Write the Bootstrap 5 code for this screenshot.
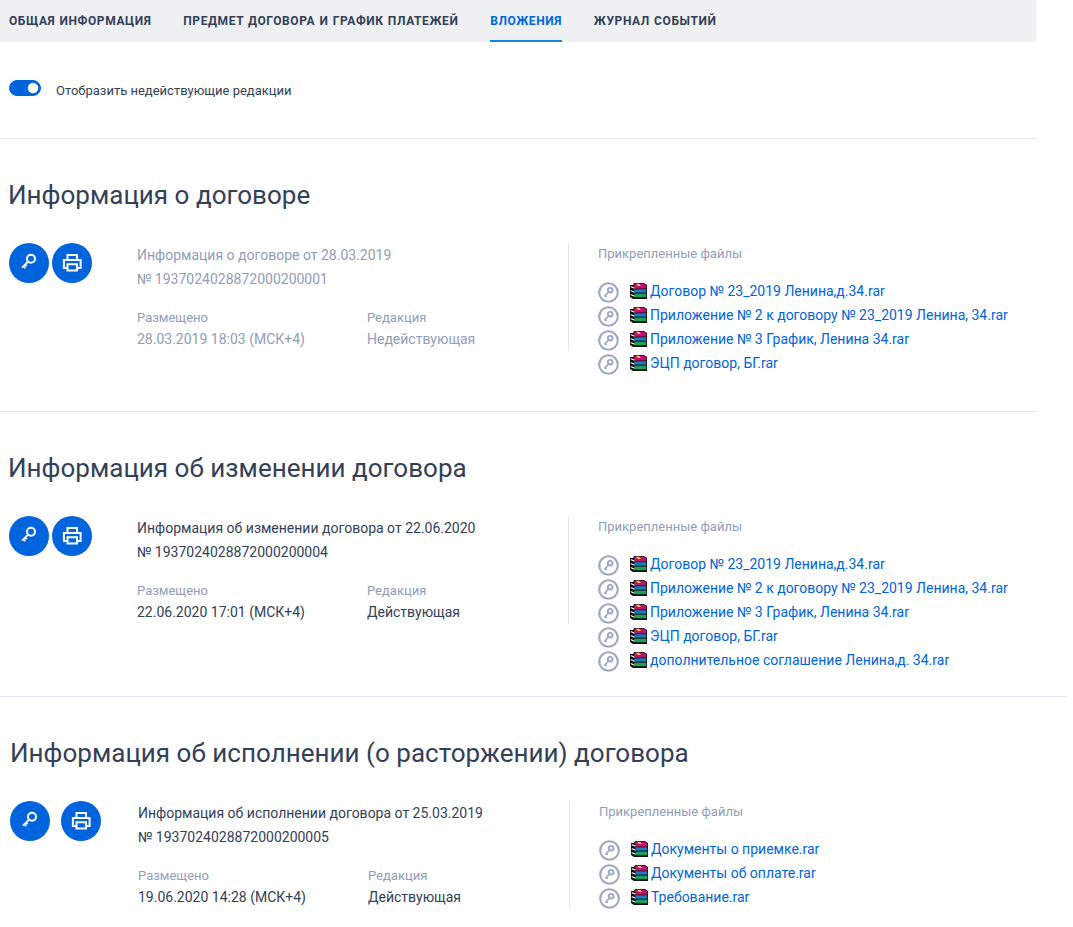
<!DOCTYPE html>
<html lang="ru">
<head>
<meta charset="utf-8">
<title>Вложения</title>
<link href="https://cdn.jsdelivr.net/npm/bootstrap@5.3.0/dist/css/bootstrap.min.css" rel="stylesheet">
<style>
html,body{overflow:hidden;height:927px}
body{font-family:Roboto,"Liberation Sans",sans-serif;font-size:14px;color:#334059;background:#fff}
.tabs{width:1036px;height:42px;background:#eff0f2;padding-left:9px;gap:31.8px}
.tabs .nav-link{padding:0;height:42px;line-height:43px;font-size:12px;font-weight:700;letter-spacing:.6px;word-spacing:.6px;color:#334059;text-transform:uppercase;border-bottom:2px solid transparent}
.tabs .nav-link.active{color:#0065dd;border-bottom-color:#1a83e6}
.toggle-row{height:97px;width:1036px;padding-left:9px;border-bottom:1px solid #e4e7f2;padding-top:38px}
.toggle-row .form-check-input{margin:0;float:none;width:32px;height:16px;background-color:#0065dd;border-color:#0065dd;box-shadow:none}
.toggle-row label{font-size:13px;margin-left:15px;line-height:16px;margin-top:3px}
.sec{padding-left:9px}
.sec-1{height:273px;width:1036px;border-bottom:1px solid #e4e7f2}
.sec-2{height:285px;width:1067px;border-bottom:1px solid #e4e7f2}
.sec-3{padding-left:10px}
h2.title{font-size:26px;font-weight:400;line-height:32px;color:#334059;margin:0 0 0 -1px;padding-top:40px;height:104px;letter-spacing:.02px}
.sec-3 h2.title{margin-left:0}
.acts{width:128px;gap:3px;flex:none}
.sec-3 .acts{gap:11px}
.round{width:40px;height:40px;padding:0;border-radius:50%;background:#0065dd;border:0;color:#fff}
.info{width:431px;flex:none;line-height:24px}
.info.off,.info.off .val{color:#919db9}
.head-line{margin-bottom:16px}
.head-line div{height:24px}
.cols .lab{width:230px;flex:none}
.lab small{display:block;font-size:13px;line-height:22px;color:#919db9}
.val{line-height:22px;margin-top:-1px}
.files{border-left:1px solid #e4e7f2;padding-left:29px;height:108px}
.files-h{font-size:13px;line-height:22px;color:#919db9;margin:0 0 14px}
.file{height:24px;line-height:24px;gap:11px;white-space:nowrap}
.file a{color:#0065dd;text-decoration:none}
.file .ck{margin-top:2px}
.file .rar{margin-right:-8px}
</style>
</head>
<body>
<svg width="0" height="0" class="d-block" aria-hidden="true">
<defs>
<symbol id="key" viewBox="0 0 20 20"><circle cx="12" cy="5.700" r="4" fill="none" stroke="currentColor" stroke-width="2"/><path d="M9.200 8.500 3 14.700M4.300 13.200l2 2M6.100 11.500l1.700 1.700" fill="none" stroke="currentColor" stroke-width="1.800"/></symbol>
<symbol id="print" viewBox="0 0 20 20"><path d="M5.500 7V1.900h9.500V7M5.500 15H1.900V7h16.700v8H15" fill="none" stroke="currentColor" stroke-width="2"/><path d="M5.500 11.300H15v6.300H5.500z" fill="none" stroke="currentColor" stroke-width="2"/></symbol>
<symbol id="ckey" viewBox="0 0 21 21"><circle cx="10.500" cy="10.500" r="9.300" fill="none" stroke="#9ca7c4" stroke-width="2.100"/><circle cx="12.200" cy="8.200" r="2.300" fill="none" stroke="#9ca7c4" stroke-width="1.900"/><path d="M10.500 10 6.300 14.500M7.300 13.500l1.300 1.300" fill="none" stroke="#9ca7c4" stroke-width="1.700"/></symbol>
<symbol id="rar" viewBox="0 0 17 16"><path d="M0 2h3l1-2h10l3 2v14H3L0 14z" fill="#111"/><path d="M4 .8h10l2.200 1.500V5.400H4.500z" fill="#c5106f"/><path d="M6 .8h3l2 2.200H8z" fill="#e9d256"/><path d="M4.500 6.300h11.700v3.300H4.500z" fill="#1b7cc4"/><path d="M4.500 10.600h11.700v3.600H4.500z" fill="#1aa05a"/><path d="M.8 3l3.700 1.500v1.200L.8 4.200zM.8 7l3.700 1.500v1.200L.8 8.200zM.8 11l3.700 1.500v1.200L.8 12.200z" fill="#f7f7f7"/></symbol>
</defs>
</svg>

<ul class="nav tabs flex-nowrap">
<li class="nav-item"><a class="nav-link" href="#">Общая информация</a></li>
<li class="nav-item"><a class="nav-link" href="#">Предмет договора и график платежей</a></li>
<li class="nav-item"><a class="nav-link active" href="#">Вложения</a></li>
<li class="nav-item"><a class="nav-link" href="#">Журнал событий</a></li>
</ul>

<div class="toggle-row form-switch d-flex align-items-start">
<input class="form-check-input" type="checkbox" role="switch" id="sw" checked>
<label for="sw">Отобразить недействующие редакции</label>
</div>

<section class="sec sec-1">
<h2 class="title">Информация о договоре</h2>
<div class="d-flex">
<div class="acts d-flex align-items-start">
<button class="round btn d-flex align-items-center justify-content-center" type="button" aria-label="Просмотр"><svg width="20" height="20"><use href="#key"/></svg></button>
<button class="round btn d-flex align-items-center justify-content-center" type="button" aria-label="Печать"><svg width="20" height="20"><use href="#print"/></svg></button>
</div>
<div class="info off">
<div class="head-line"><div>Информация о договоре от 28.03.2019</div><div>№ 1937024028872000200001</div></div>
<div class="cols d-flex">
<div class="lab"><small>Размещено</small><div class="val">28.03.2019 18:03 (МСК+4)</div></div>
<div class="lab"><small>Редакция</small><div class="val">Недействующая</div></div>
</div>
</div>
<div class="files">
<p class="files-h">Прикрепленные файлы</p>
<div class="file d-flex align-items-center"><svg class="ck" width="21" height="21"><use href="#ckey"/></svg><svg class="rar" width="17" height="16"><use href="#rar"/></svg><a href="#">Договор № 23_2019 Ленина,д.34.rar</a></div>
<div class="file d-flex align-items-center"><svg class="ck" width="21" height="21"><use href="#ckey"/></svg><svg class="rar" width="17" height="16"><use href="#rar"/></svg><a href="#">Приложение № 2 к договору № 23_2019 Ленина, 34.rar</a></div>
<div class="file d-flex align-items-center"><svg class="ck" width="21" height="21"><use href="#ckey"/></svg><svg class="rar" width="17" height="16"><use href="#rar"/></svg><a href="#">Приложение № 3 График, Ленина 34.rar</a></div>
<div class="file d-flex align-items-center"><svg class="ck" width="21" height="21"><use href="#ckey"/></svg><svg class="rar" width="17" height="16"><use href="#rar"/></svg><a href="#">ЭЦП договор, БГ.rar</a></div>
</div>
</div>
</section>

<section class="sec sec-2">
<h2 class="title">Информация об изменении договора</h2>
<div class="d-flex">
<div class="acts d-flex align-items-start">
<button class="round btn d-flex align-items-center justify-content-center" type="button" aria-label="Просмотр"><svg width="20" height="20"><use href="#key"/></svg></button>
<button class="round btn d-flex align-items-center justify-content-center" type="button" aria-label="Печать"><svg width="20" height="20"><use href="#print"/></svg></button>
</div>
<div class="info">
<div class="head-line"><div>Информация об изменении договора от 22.06.2020</div><div>№ 1937024028872000200004</div></div>
<div class="cols d-flex">
<div class="lab"><small>Размещено</small><div class="val">22.06.2020 17:01 (МСК+4)</div></div>
<div class="lab"><small>Редакция</small><div class="val">Действующая</div></div>
</div>
</div>
<div class="files">
<p class="files-h">Прикрепленные файлы</p>
<div class="file d-flex align-items-center"><svg class="ck" width="21" height="21"><use href="#ckey"/></svg><svg class="rar" width="17" height="16"><use href="#rar"/></svg><a href="#">Договор № 23_2019 Ленина,д.34.rar</a></div>
<div class="file d-flex align-items-center"><svg class="ck" width="21" height="21"><use href="#ckey"/></svg><svg class="rar" width="17" height="16"><use href="#rar"/></svg><a href="#">Приложение № 2 к договору № 23_2019 Ленина, 34.rar</a></div>
<div class="file d-flex align-items-center"><svg class="ck" width="21" height="21"><use href="#ckey"/></svg><svg class="rar" width="17" height="16"><use href="#rar"/></svg><a href="#">Приложение № 3 График, Ленина 34.rar</a></div>
<div class="file d-flex align-items-center"><svg class="ck" width="21" height="21"><use href="#ckey"/></svg><svg class="rar" width="17" height="16"><use href="#rar"/></svg><a href="#">ЭЦП договор, БГ.rar</a></div>
<div class="file d-flex align-items-center"><svg class="ck" width="21" height="21"><use href="#ckey"/></svg><svg class="rar" width="17" height="16"><use href="#rar"/></svg><a href="#">дополнительное соглашение Ленина,д. 34.rar</a></div>
</div>
</div>
</section>

<section class="sec sec-3">
<h2 class="title">Информация об исполнении (о расторжении) договора</h2>
<div class="d-flex">
<div class="acts d-flex align-items-start">
<button class="round btn d-flex align-items-center justify-content-center" type="button" aria-label="Просмотр"><svg width="20" height="20"><use href="#key"/></svg></button>
<button class="round btn d-flex align-items-center justify-content-center" type="button" aria-label="Печать"><svg width="20" height="20"><use href="#print"/></svg></button>
</div>
<div class="info">
<div class="head-line"><div>Информация об исполнении договора от 25.03.2019</div><div>№ 1937024028872000200005</div></div>
<div class="cols d-flex">
<div class="lab"><small>Размещено</small><div class="val">19.06.2020 14:28 (МСК+4)</div></div>
<div class="lab"><small>Редакция</small><div class="val">Действующая</div></div>
</div>
</div>
<div class="files">
<p class="files-h">Прикрепленные файлы</p>
<div class="file d-flex align-items-center"><svg class="ck" width="21" height="21"><use href="#ckey"/></svg><svg class="rar" width="17" height="16"><use href="#rar"/></svg><a href="#">Документы о приемке.rar</a></div>
<div class="file d-flex align-items-center"><svg class="ck" width="21" height="21"><use href="#ckey"/></svg><svg class="rar" width="17" height="16"><use href="#rar"/></svg><a href="#">Документы об оплате.rar</a></div>
<div class="file d-flex align-items-center"><svg class="ck" width="21" height="21"><use href="#ckey"/></svg><svg class="rar" width="17" height="16"><use href="#rar"/></svg><a href="#">Требование.rar</a></div>
</div>
</div>
</section>
<script src="https://cdn.jsdelivr.net/npm/bootstrap@5.3.0/dist/js/bootstrap.bundle.min.js"></script>
</body>
</html>
